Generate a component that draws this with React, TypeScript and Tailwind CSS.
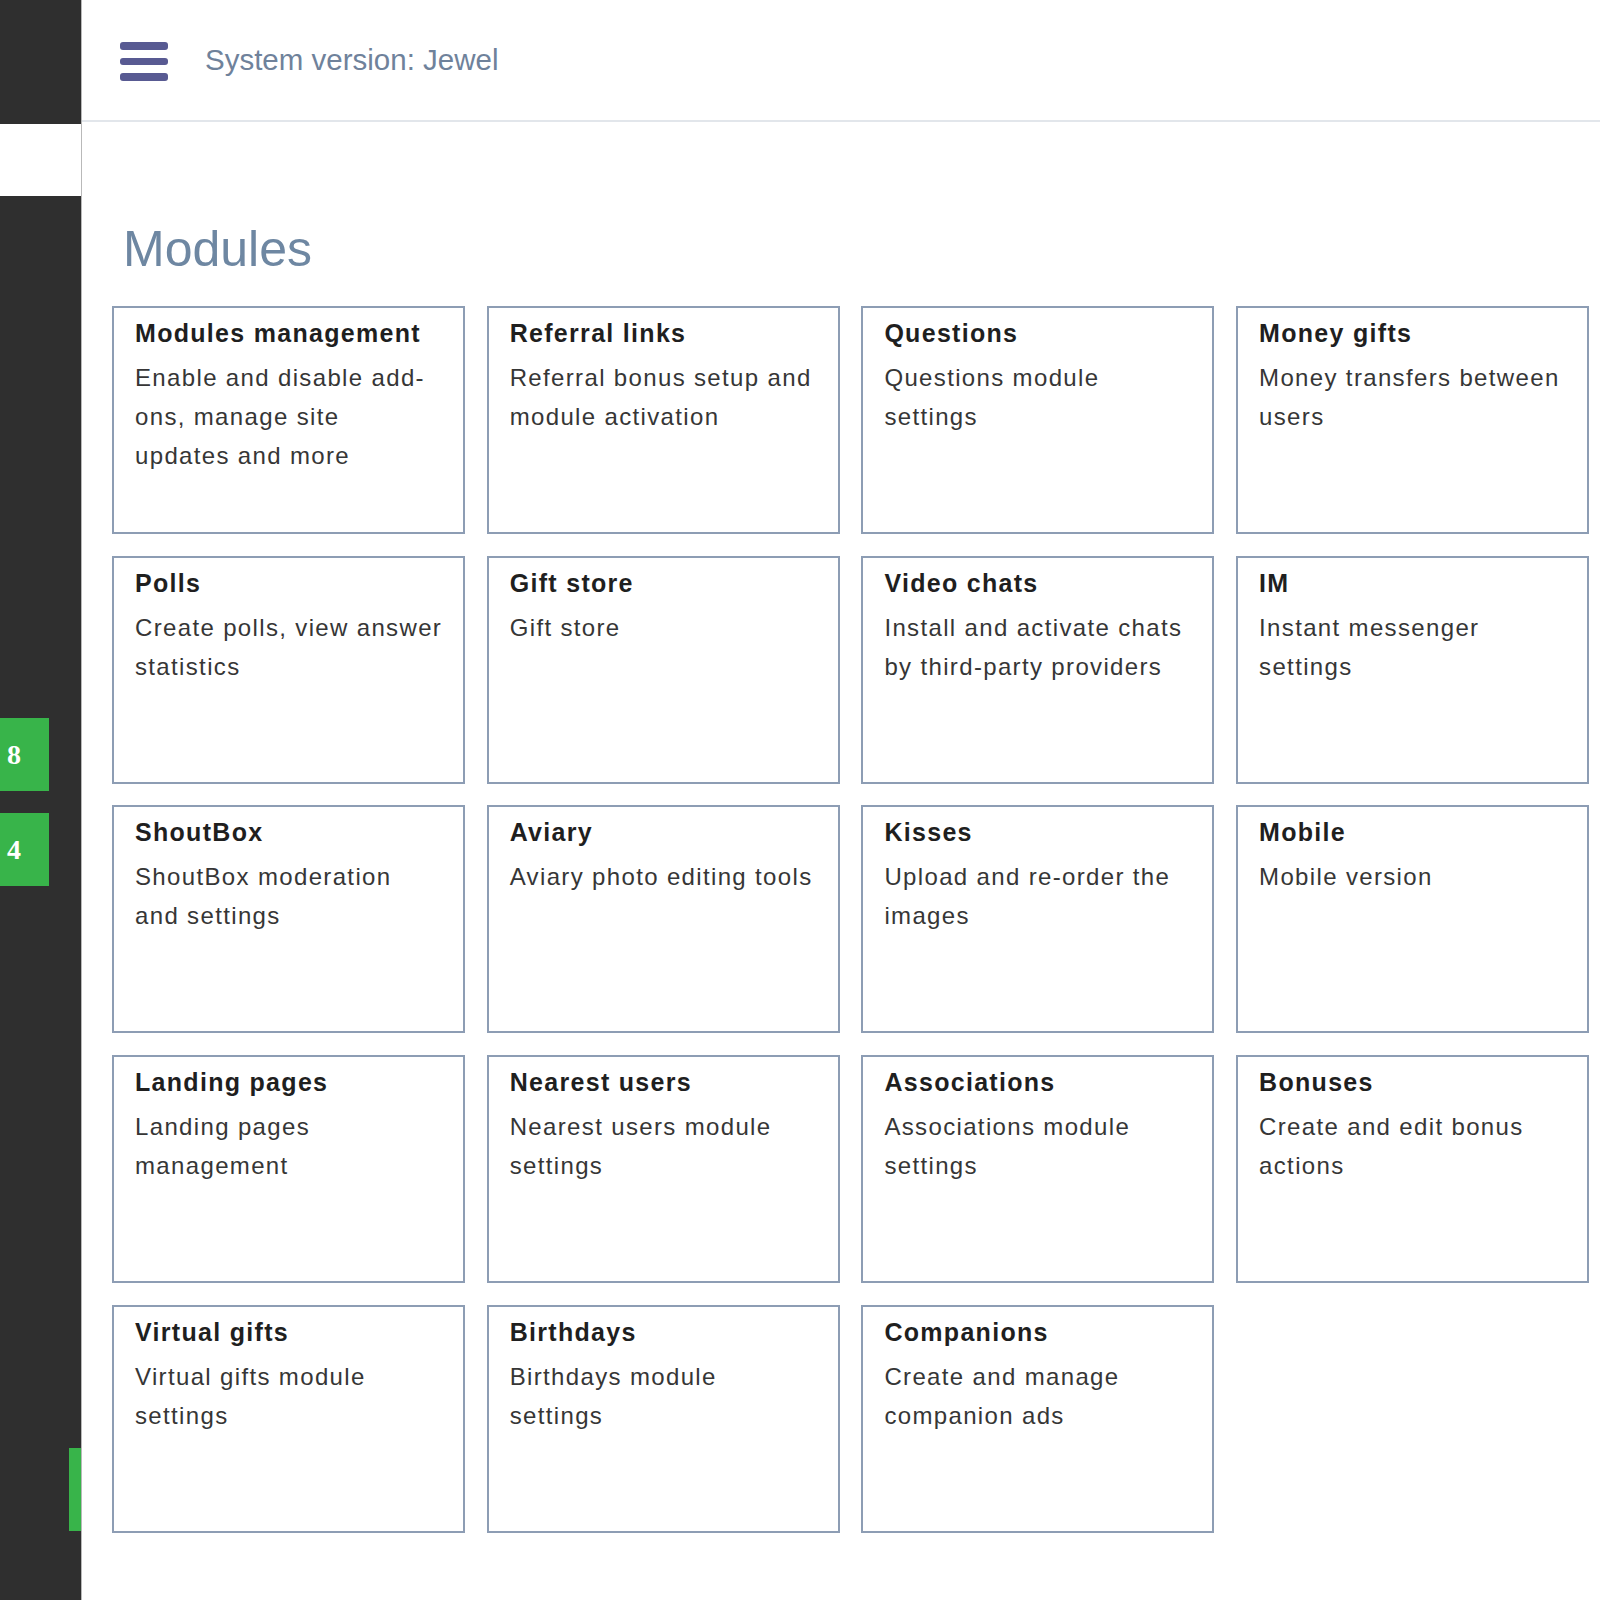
import React from 'react';

type Module = {
  title: string;
  lines: string[];
};

const modules: Module[] = [
  { title: 'Modules management', lines: ['Enable and disable add-', 'ons, manage site', 'updates and more'] },
  { title: 'Referral links', lines: ['Referral bonus setup and', 'module activation'] },
  { title: 'Questions', lines: ['Questions module', 'settings'] },
  { title: 'Money gifts', lines: ['Money transfers between', 'users'] },
  { title: 'Polls', lines: ['Create polls, view answer', 'statistics'] },
  { title: 'Gift store', lines: ['Gift store'] },
  { title: 'Video chats', lines: ['Install and activate chats', 'by third-party providers'] },
  { title: 'IM', lines: ['Instant messenger', 'settings'] },
  { title: 'ShoutBox', lines: ['ShoutBox moderation', 'and settings'] },
  { title: 'Aviary', lines: ['Aviary photo editing tools'] },
  { title: 'Kisses', lines: ['Upload and re-order the', 'images'] },
  { title: 'Mobile', lines: ['Mobile version'] },
  { title: 'Landing pages', lines: ['Landing pages', 'management'] },
  { title: 'Nearest users', lines: ['Nearest users module', 'settings'] },
  { title: 'Associations', lines: ['Associations module', 'settings'] },
  { title: 'Bonuses', lines: ['Create and edit bonus', 'actions'] },
  { title: 'Virtual gifts', lines: ['Virtual gifts module', 'settings'] },
  { title: 'Birthdays', lines: ['Birthdays module', 'settings'] },
  { title: 'Companions', lines: ['Create and manage', 'companion ads'] },
];

function Sidebar() {
  return (
    <aside className="w-[82px] shrink-0 bg-[#2f2f2f] border-r border-[#b9b9b9] flex flex-col">
      <div className="h-[124px]" />
      <div className="h-[72px] bg-white" />
      <div className="mt-[522px] h-[73px] w-[49px] bg-[#38b44a] flex items-center pl-[7px] text-white text-[28px] font-bold font-['Liberation_Serif',serif]">
        8
      </div>
      <div className="mt-[22px] h-[73px] w-[49px] bg-[#38b44a] flex items-center pl-[7px] text-white text-[28px] font-bold font-['Liberation_Serif',serif]">
        4
      </div>
      <div className="mt-[562px] h-[83px] w-[12px] self-end bg-[#38b44a]" />
    </aside>
  );
}

function ModuleCard({ module }: { module: Module }) {
  return (
    <div className="h-[228px] border-2 border-[#8d9db4] bg-white pt-[9px] pl-[21px] pr-[8px]">
      <div className="text-[25px] leading-[32px] font-bold tracking-[1.3px] text-[#1f1f1f] whitespace-nowrap">
        {module.title}
      </div>
      <div className="mt-[9px] text-[24px] leading-[39px] tracking-[1.35px] text-[#363636]">
        {module.lines.map((line) => (
          <div key={line} className="whitespace-nowrap">
            {line}
          </div>
        ))}
      </div>
    </div>
  );
}

function App() {
  return (
    <div className="h-[1600px] flex bg-white font-['Liberation_Sans',Arial,sans-serif] overflow-hidden">
      <Sidebar />
      <div className="flex-1 flex flex-col">
        <header className="h-[122px] shrink-0 border-b-2 border-[#e2e6eb] flex items-center pl-[38px] gap-[37px]">
          <svg width="48" height="40" viewBox="0 0 48 40" className="mt-[4px]">
            <rect x="0" y="0" width="48" height="8" rx="3" fill="#585a92" />
            <rect x="0" y="16" width="48" height="7" rx="3" fill="#585a92" />
            <rect x="0" y="31" width="48" height="8" rx="3" fill="#585a92" />
          </svg>
          <span className="text-[29.5px] text-[#6f829b]">System version: Jewel</span>
        </header>

        <main className="pl-[30px]">
          <h1 className="mt-[102px] ml-[11px] text-[50px] leading-[50px] text-[#6e87a2]">Modules</h1>
          <div className="mt-[32px] grid grid-cols-[repeat(4,353px)] gap-x-[21.7px] gap-y-[21.7px]">
            {modules.map((m) => (
              <ModuleCard key={m.title} module={m} />
            ))}
          </div>
        </main>
      </div>
    </div>
  );
}

export default App;
